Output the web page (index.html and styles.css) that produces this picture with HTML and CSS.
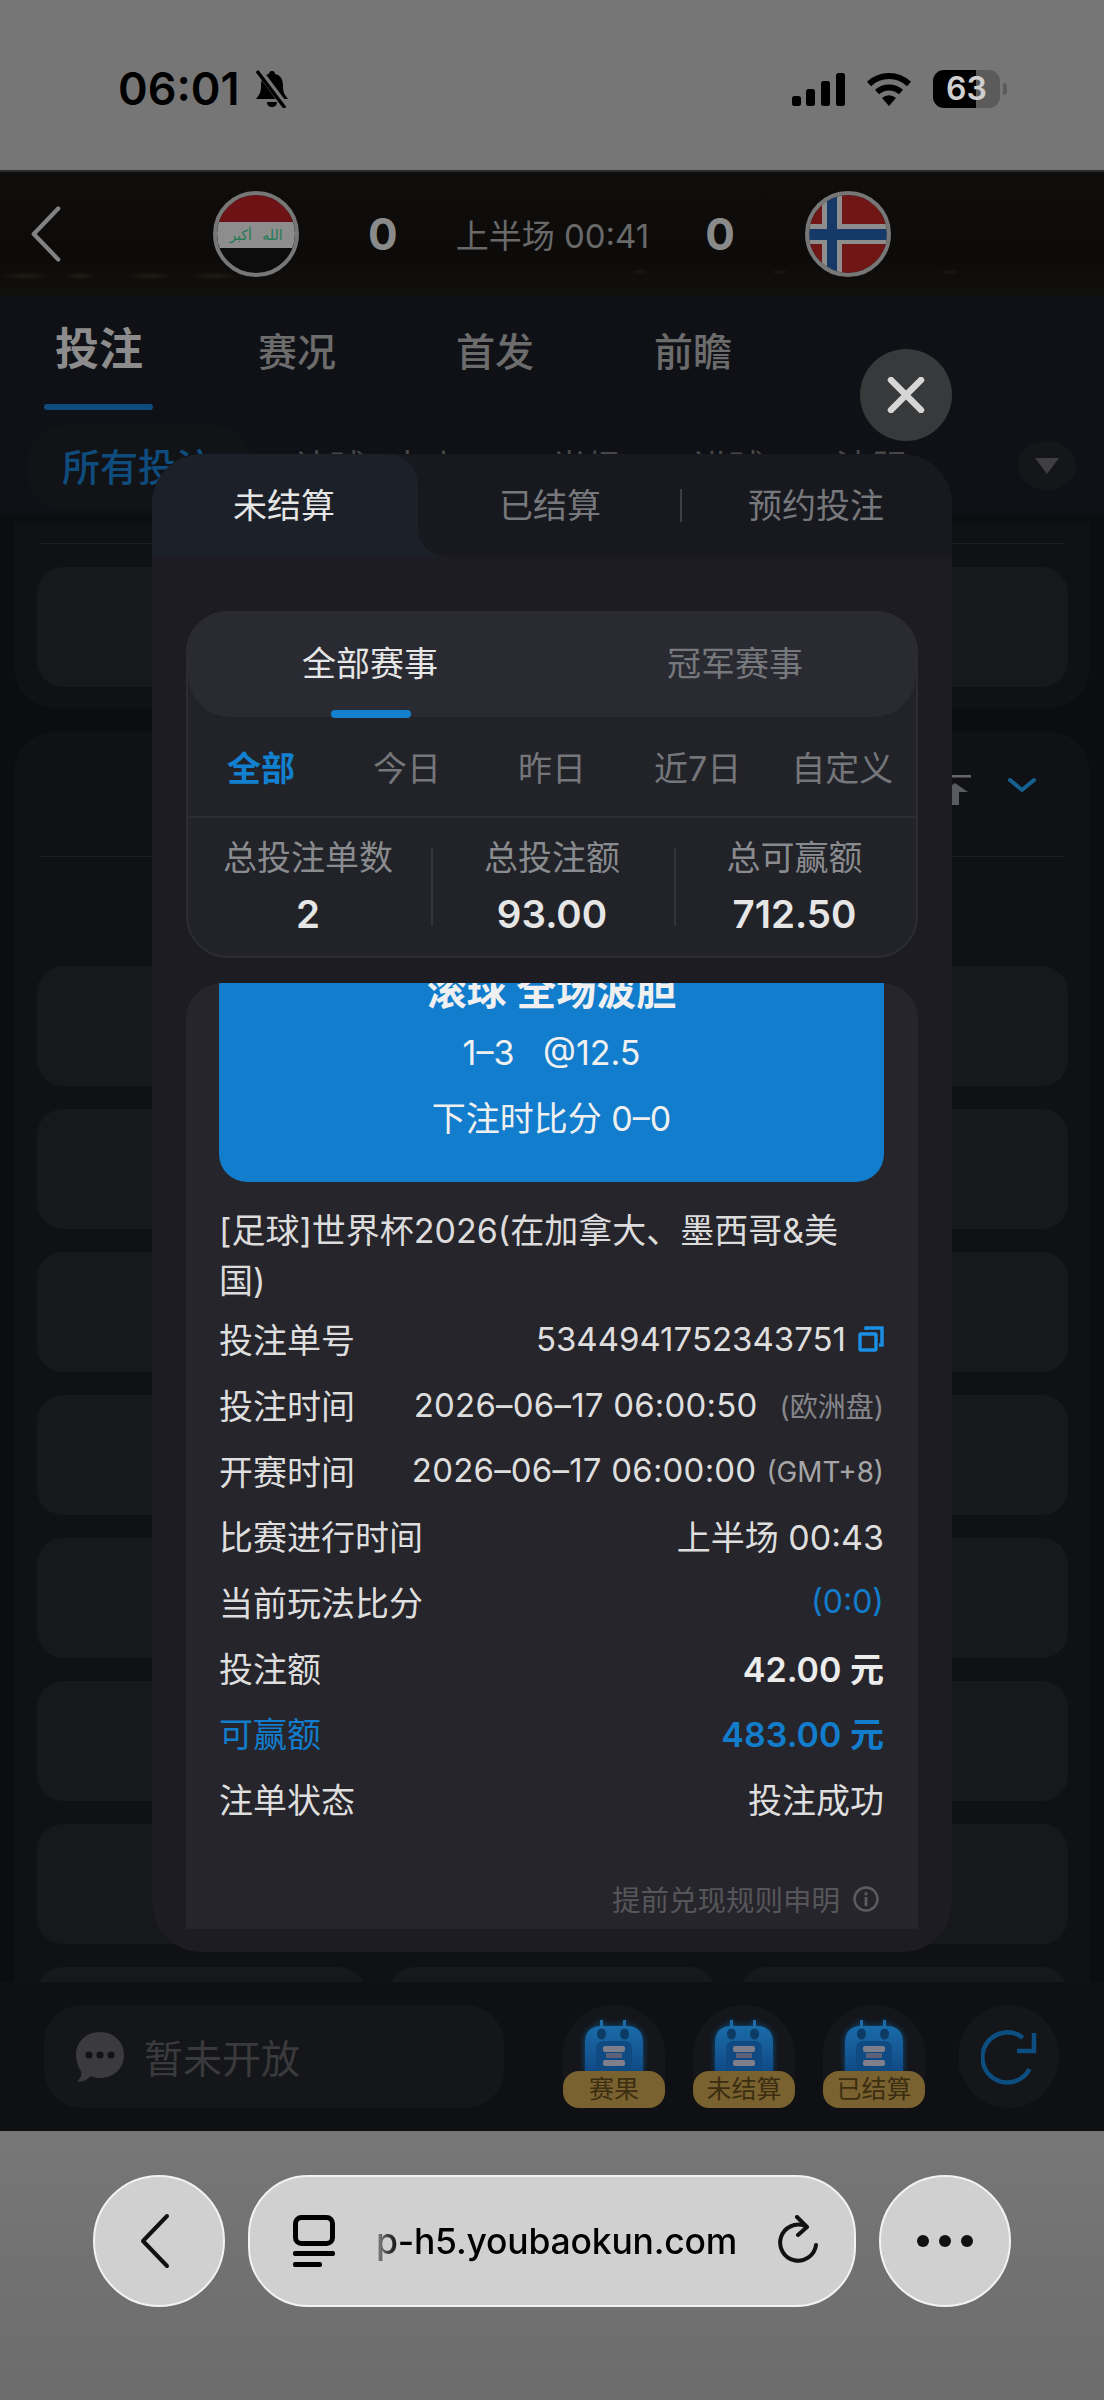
FILE: index.html
```html
<!DOCTYPE html>
<html lang="zh-CN">
<head>
<meta charset="utf-8">
<title>投注</title>
<link rel="stylesheet" href="styles.css">
</head>
<body>
<div class="screen">
  <header class="statusbar">
    <div class="clock">
      <span class="time">06:01</span>
      <svg class="bell" viewBox="0 0 36 38"><path d="M18 1c2 0 3 1 3 3 6 1 8 6 8 12 0 7 2 9 5 13H2c3-4 5-6 5-13 0-6 2-11 8-12 0-2 1-3 3-3zM13 32h10c0 3-2 5-5 5s-5-2-5-5z" fill="#000"/><path d="M5 1l27 36" stroke="#767676" stroke-width="7"/><path d="M3 1l28 37" stroke="#000" stroke-width="3.4"/></svg>
    </div>
    <div class="sysicons">
      <svg class="signal" viewBox="0 0 53 33"><rect x="0" y="23" width="9" height="10" rx="2.5"/><rect x="14" y="16" width="9" height="17" rx="2.5"/><rect x="29" y="8" width="9" height="25" rx="2.5"/><rect x="44" y="0" width="9" height="33" rx="2.5"/></svg>
      <svg class="wifi" viewBox="0 0 46 34"><path d="M3 12a29 29 0 0 1 40 0" fill="none" stroke="#000" stroke-width="6"/><path d="M11 20a18 18 0 0 1 24 0" fill="none" stroke="#000" stroke-width="6"/><path d="M16 26a10 10 0 0 1 14 0l-7 8z"/></svg>
      <div class="battery"><span class="batt-level">63</span></div>
      <span class="batt-nub"></span>
    </div>
  </header>

  <main class="app">
    <section class="match">
      <svg class="back" viewBox="0 0 34 60"><path d="M30 3L4 30l26 27" fill="none" stroke="#828282" stroke-width="4.5" stroke-linecap="round" stroke-linejoin="round"/></svg>
      <svg class="flag flag-iq" viewBox="0 0 86 86">
        <defs><clipPath id="c1"><circle cx="43" cy="43" r="39"/></clipPath></defs>
        <g clip-path="url(#c1)">
          <rect width="86" height="31" fill="#6f1216"/><rect y="31" width="86" height="26" fill="#8d8d8d"/><rect y="57" width="86" height="29" fill="#0d0c0d"/>
          <text x="43" y="49" text-anchor="middle" class="flag-script">الله أكبر</text>
        </g>
        <circle cx="43" cy="43" r="41" fill="none" stroke="#777" stroke-width="4"/>
      </svg>
      <strong class="score">0</strong>
      <span class="period">上半场 00:41</span>
      <strong class="score">0</strong>
      <svg class="flag flag-no" viewBox="0 0 86 86">
        <defs><clipPath id="c2"><circle cx="43" cy="43" r="39"/></clipPath></defs>
        <g clip-path="url(#c2)">
          <rect width="86" height="86" fill="#701614"/>
          <rect x="17" width="20" height="86" fill="#8d8d8d"/><rect y="33" width="86" height="20" fill="#8d8d8d"/>
          <rect x="22" width="10" height="86" fill="#153a68"/><rect y="38" width="86" height="11" fill="#153a68"/>
        </g>
        <circle cx="43" cy="43" r="41" fill="none" stroke="#777" stroke-width="4"/>
      </svg>
    </section>

    <nav class="maintabs">
      <a class="maintab is-on">投注</a><a class="maintab">赛况</a><a class="maintab">首发</a><a class="maintab">前瞻</a>
    </nav>

    <div class="filters">
      <span class="pill">所有投注</span>
      <span class="filter f1">让球&amp;大小</span>
      <span class="filter f2">半场</span>
      <span class="filter f3">进球</span>
      <span class="filter f4">波胆</span>
      <span class="drop"><i class="drop-arrow"></i></span>
    </div>

    <div class="panel panel-top">
      <div class="sep"></div>
      <div class="rowcard"></div>
    </div>

    <div class="panel panel-list">
      <div class="panel-head">
        <svg class="totop" viewBox="0 0 32 30"><path d="M0 1h32" stroke="#666" stroke-width="3"/><path d="M16 8L3 17h8v13h9V17h9z" fill="#585c60"/></svg>
        <svg class="chev" viewBox="0 0 28 16"><path d="M2 3l12 10L26 3" fill="none" stroke="#14618f" stroke-width="4" stroke-linecap="round"/></svg>
      </div>
      <div class="sep sep-list"></div>
      <div class="rowcard"></div><div class="rowcard"></div><div class="rowcard"></div><div class="rowcard"></div>
      <div class="rowcard"></div><div class="rowcard"></div><div class="rowcard"></div>
      <div class="cols"><div class="colcard"></div><div class="colcard"></div><div class="colcard"></div></div>
    </div>

    <footer class="dock">
      <div class="chatbox">
        <svg class="chat-ico" viewBox="0 0 50 52"><path d="M25 1c14 0 24 10 24 23S39 47 25 47c-3 0-6 0-9-2-3 3-8 6-14 6 3-3 5-7 4-11C3 36 1 30 1 24 1 11 11 1 25 1z" fill="#3b3b3d"/><circle cx="14" cy="24" r="3.6" fill="#121316"/><circle cx="25" cy="24" r="3.6" fill="#121316"/><circle cx="36" cy="24" r="3.6" fill="#121316"/></svg>
        <span class="chat-text">暂未开放</span>
      </div>
      <div class="shortcuts">
        <div class="shortcut">
          <svg class="book" viewBox="0 0 58 52"><use href="#bookshape"/></svg>
          <span class="badge">赛果</span>
        </div>
        <div class="shortcut">
          <svg class="book" viewBox="0 0 58 52"><use href="#bookshape"/></svg>
          <span class="badge">未结算</span>
        </div>
        <div class="shortcut">
          <svg class="book" viewBox="0 0 58 52"><use href="#bookshape"/></svg>
          <span class="badge">已结算</span>
        </div>
      </div>
      <div class="refresh">
        <svg viewBox="0 0 56 56"><path d="M39 7A25 25 0 1 0 50 37" fill="none" stroke="#0d4e80" stroke-width="4.5" transform="rotate(8 28 28)"/><path d="M53 4v18H36" fill="none" stroke="#0d4e80" stroke-width="4.5"/></svg>
      </div>
    </footer>
  </main>

  <footer class="browser">
    <button class="round">
      <svg viewBox="0 0 30 56" class="b-back"><path d="M27 3L3 28l24 25" fill="none" stroke="#111" stroke-width="4" stroke-linecap="round" stroke-linejoin="round"/></svg>
    </button>
    <div class="urlbar">
      <svg class="u-tabs" viewBox="0 0 42 52"><rect x="2.5" y="2.5" width="37" height="26" rx="6" fill="none" stroke="#000" stroke-width="5"/><rect x="0" y="36" width="42" height="5" rx="2" fill="#000"/><rect x="0" y="47" width="29" height="5" rx="2" fill="#000"/></svg>
      <span class="url">p-h5.youbaokun.com</span>
      <svg class="u-reload" viewBox="0 0 42 52"><path d="M27 11A18 18 0 1 0 38 30" fill="none" stroke="#111" stroke-width="4" stroke-linecap="round"/><path d="M19 2l10 10-9 8" fill="none" stroke="#111" stroke-width="4" stroke-linecap="round" stroke-linejoin="round"/></svg>
    </div>
    <button class="round">
      <span class="dots"><i></i><i></i><i></i></span>
    </button>
  </footer>

  <button class="close" aria-label="关闭">
    <svg viewBox="0 0 38 36"><path d="M4 3l30 30M34 3L4 33" stroke="#d6d6d6" stroke-width="6.5" stroke-linecap="round"/></svg>
  </button>

  <aside class="modal">
    <div class="m-tabs">
      <span class="m-tab is-on">未结算</span>
      <span class="m-tab m-tab2">已结算</span>
      <span class="m-div"></span>
      <span class="m-tab m-tab3">预约投注</span>
    </div>

    <section class="summary">
      <div class="kinds">
        <span class="kind is-on">全部赛事</span>
        <span class="kind">冠军赛事</span>
      </div>
      <div class="ranges">
        <span class="range is-on">全部</span><span class="range">今日</span><span class="range">昨日</span><span class="range">近7日</span><span class="range">自定义</span>
      </div>
      <div class="stats">
        <div class="stat"><span class="stat-l">总投注单数</span><b class="stat-v">2</b></div>
        <div class="stat"><span class="stat-l">总投注额</span><b class="stat-v">93.00</b></div>
        <div class="stat"><span class="stat-l">总可赢额</span><b class="stat-v">712.50</b></div>
      </div>
    </section>

    <section class="ticket">
      <div class="bluebox">
        <div class="bb-title">滚球 全场波胆</div>
        <div class="bb-line bb-odds">1–3&nbsp;&nbsp;&nbsp;@12.5</div>
        <div class="bb-line">下注时比分 0–0</div>
      </div>
      <div class="league">[足球]世界杯2026(在加拿大、墨西哥&amp;美国)</div>
      <div class="kv"><span>投注单号</span><span class="num v-id">5344941752343751<svg class="copy" viewBox="0 0 26 26"><rect x="2" y="8" width="16" height="16" rx="1" fill="none" stroke="#1a8fe6" stroke-width="3.4"/><path d="M8 4V2h16v17h-3" fill="none" stroke="#1a8fe6" stroke-width="3.4"/></svg></span></div>
      <div class="kv"><span>投注时间</span><span class="num date">2026–06–17 06:00:50<small class="tag tag-gap">(欧洲盘)</small></span></div>
      <div class="kv"><span>开赛时间</span><span class="num date">2026–06–17 06:00:00<small class="tag">(GMT+8)</small></span></div>
      <div class="kv"><span>比赛进行时间</span><span>上半场 00:43</span></div>
      <div class="kv"><span>当前玩法比分</span><span class="blue score-now">(0:0)</span></div>
      <div class="kv"><span>投注额</span><b class="strong">42.00 元</b></div>
      <div class="kv blue"><span>可赢额</span><b class="strong">483.00 元</b></div>
      <div class="kv"><span>注单状态</span><span>投注成功</span></div>
      <div class="rules">提前兑现规则申明<svg class="info" viewBox="0 0 26 26"><circle cx="13" cy="13" r="11.5" fill="none" stroke="#5d5d60" stroke-width="2.4"/><rect x="11.6" y="11" width="2.8" height="9" fill="#5d5d60"/><rect x="11.6" y="6.4" width="2.8" height="2.8" fill="#5d5d60"/></svg></div>
    </section>
  </aside>

  <svg class="defs" width="0" height="0">
    <symbol id="bookshape" viewBox="0 0 58 52">
      <defs><linearGradient id="bookfill" x1="0" y1="0" x2="0" y2="1"><stop offset="0" stop-color="#1a6ba8"/><stop offset="1" stop-color="#0f4a86"/></linearGradient></defs>
      <path d="M0 52V22C0 12 6 6 16 6h26c10 0 16 6 16 16v30z" fill="url(#bookfill)"/>
      <rect x="15" y="0" width="3" height="10" fill="#1d6da8"/><rect x="38" y="0" width="3" height="10" fill="#1d6da8"/>
      <ellipse cx="16.500" cy="14" rx="4.500" ry="5.500" fill="#0c3c66"/><ellipse cx="39.500" cy="14" rx="4.500" ry="5.500" fill="#0c3c66"/>
      <path d="M11 52V29c0-5 3-8 8-8h20c5 0 8 3 8 8v23z" fill="#0f4a82"/>
      <rect x="18" y="26" width="22" height="6" rx="2" fill="#7f7f8c"/><rect x="21" y="33" width="16" height="5" rx="1" fill="#5d6278"/><rect x="18" y="40" width="22" height="6" rx="2" fill="#7f7f8c"/>
    </symbol>
  </svg>
</div>
</body>
</html>
```

FILE: styles.css
```css
* { box-sizing: border-box; }
html, body { margin: 0; padding: 0; background: #767676; }
body { font-family: Inter, "Noto Sans CJK SC", sans-serif; }
i { display: block; }
button { border: 0; padding: 0; font: inherit; }

.screen { position: relative; width: 1104px; height: 2400px; display: flex; flex-direction: column; overflow: hidden; }
.defs { position: absolute; }

/* status bar */
.statusbar { height: 170px; flex: none; background: #767676; display: flex; justify-content: space-between; padding: 70px 97px 0 118px; }
.clock { display: flex; align-items: flex-start; gap: 14px; height: 38px; }
.time { font-size: 45px; font-weight: 600; line-height: 38px; color: #000; }
.bell { width: 36px; height: 38px; }
.sysicons { display: flex; align-items: flex-start; }
.signal { width: 53px; height: 33px; margin-top: 3px; }
.wifi { width: 46px; height: 34px; margin: 2px 21px; }
.battery { width: 67px; height: 38px; border-radius: 11px; background: linear-gradient(90deg, #000 64%, #5b5b5b 64%); display: flex; align-items: center; justify-content: center; }
.batt-level { color: #cfcfcf; font-size: 32px; font-weight: 600; line-height: 1; }
.batt-nub { width: 4px; height: 12px; margin: 13px 0 0 3px; background: #5b5b5b; border-radius: 0 4px 4px 0; }

/* app behind the sheet */
.app { height: 1961px; flex: none; background: #0c0d0f; display: flex; flex-direction: column; overflow: hidden; }
.match { height: 125px; flex: none; display: flex; align-items: center; padding: 0 213px 0 30px; border-top: 2px solid #2c2c2c; background: radial-gradient(ellipse 24px 4px at 25px 104px, #211c12, transparent), radial-gradient(ellipse 18px 4px at 80px 104px, #211c12, transparent), radial-gradient(ellipse 24px 4px at 150px 104px, #211c12, transparent), radial-gradient(ellipse 24px 4px at 215px 104px, #211c12, transparent), radial-gradient(ellipse 10px 3px at 640px 100px, #1c1810, transparent), radial-gradient(ellipse 10px 3px at 780px 100px, #1c1810, transparent), radial-gradient(ellipse 10px 3px at 950px 100px, #1c1810, transparent), linear-gradient(180deg, #0f0e0d 0, #0c0b0a 70%, #12100d 100%); }
.back { width: 32px; height: 58px; margin-right: 151px; }
.flag { width: 86px; height: 86px; flex: none; }
.flag-script { font-family: "DejaVu Sans", sans-serif; font-size: 14px; fill: #1f7a52; word-spacing: 6px; }
.score { font-size: 44px; font-weight: 700; color: #8a8a8a; line-height: 1; }
.flag-iq + .score { margin-left: 69px; }
.period { font-size: 33px; color: #696969; margin: 0 56px 0 58px; white-space: nowrap; }
.flag-no { margin-left: 70px; }

.maintabs { height: 130px; flex: none; background: #101116; display: flex; gap: 0; padding-left: 55px; }
.maintab { position: relative; font-size: 39px; font-weight: 500; color: #6c6c6c; line-height: 52px; margin: 31px 120px 0 0; }
.maintab.is-on { font-size: 44px; font-weight: 700; color: #8c8c8c; margin-top: 28px; margin-right: 115px; }
.maintab.is-on::after { content: ""; position: absolute; left: -11px; right: -10px; top: 81px; height: 6px; background: #0f4c7e; border-radius: 3px; }

.filters { height: 88px; flex: none; background: #101116; display: flex; align-items: center; position: relative; padding-left: 28px; }
.pill { width: 222px; height: 85px; border-radius: 36px; background: #121317; color: #0f4c7e; font-size: 38px; font-weight: 500; padding-left: 34px; line-height: 84px; white-space: nowrap; flex: none; margin-top: -3px; }
.filter { font-size: 36px; color: #474747; margin-top: -8px; white-space: nowrap; }
.f1 { margin-left: 44px; }
.f2 { margin-left: 90px; }
.f3 { margin-left: 70px; }
.f4 { margin-left: 70px; }
.drop { position: absolute; left: 1018px; top: 16px; width: 58px; height: 49px; border-radius: 50%; background: #15161a; display: flex; align-items: center; justify-content: center; }
.drop-arrow { width: 0; height: 0; border: 12px solid transparent; border-top: 16px solid #3f3f41; border-bottom: 0; }

.panel { margin: 0 14px; background: #101114; flex: none; padding: 0 22px 0 23px; }
.panel-top { height: 185px; margin-top: 10px; border-radius: 0 0 40px 40px; padding-top: 20px; margin-bottom: 24px; }
.panel-list { flex: 1; min-height: 0; flex-shrink: 1; border-radius: 40px 40px 0 0; overflow: hidden; }
.sep { height: 1px; background: #1d1e22; margin: 0 4px 23px 3px; }
.panel-head { height: 124px; display: flex; justify-content: flex-end; align-items: flex-start; gap: 37px; padding: 43px 32px 0 0; }
.totop { width: 32px; height: 30px; }
.chev { width: 28px; height: 16px; margin-top: 2px; }
.sep-list { margin-bottom: 109px; }
.rowcard { height: 120px; border-radius: 26px; background: #17181b; margin-bottom: 23px; }
.cols { display: grid; grid-template-columns: repeat(3, 1fr); gap: 24px; }
.colcard { height: 60px; border-radius: 26px 26px 0 0; background: #17181b; }

.dock { height: 149px; flex: none; background: #0f1014; display: flex; align-items: flex-start; padding: 23px 0 0 44px; position: relative; }
.chatbox { width: 460px; height: 103px; border-radius: 38px; background: #141619; display: flex; align-items: center; gap: 19px; padding-left: 31px; }
.chat-ico { width: 50px; height: 52px; }
.chat-text { font-size: 39px; color: #3a3a3c; margin-top: -2px; }
.shortcuts { display: flex; gap: 28px; margin-left: 59px; }
.shortcut { width: 102px; height: 103px; border-radius: 50px 50px 28px 28px; background: #14161a; position: relative; display: flex; justify-content: center; padding-top: 15px; }
.book { width: 58px; height: 52px; filter: drop-shadow(0 0 3px #0d4f80); }
.badge { position: absolute; left: 0; right: 0; bottom: 0; height: 37px; border-radius: 16px; background: #7a6230; color: #3c2e10; font-size: 25px; line-height: 37px; text-align: center; white-space: nowrap; }
.refresh { width: 101px; height: 103px; border-radius: 50%; background: #14161a; margin-left: 33px; display: flex; align-items: center; justify-content: center; }
.refresh svg { width: 56px; height: 56px; }

/* browser bar */
.browser { flex: 1; background: linear-gradient(180deg, #777 0, #6c6c6c 100%); display: flex; gap: 23px; padding: 44px 0 0 93px; }
.round { width: 132px; height: 132px; border-radius: 50%; background: #d0d0d0; border: 2px solid #f2f2f2; display: flex; align-items: center; justify-content: center; flex: none; }
.b-back { width: 30px; height: 56px; margin-right: 8px; }
.dots { display: flex; gap: 10px; }
.dots i { width: 12px; height: 12px; border-radius: 50%; background: #111; }
.urlbar { width: 608px; height: 132px; border-radius: 60px; background: #d0d0d0; border: 2px solid #f2f2f2; display: flex; align-items: center; padding: 0 34px 0 43px; flex: none; }
.u-tabs { width: 42px; height: 52px; flex: none; }
.url { margin-left: 41px; font-size: 35.500px; font-weight: 500; letter-spacing: -0.2px; color: #000; white-space: nowrap; -webkit-mask-image: linear-gradient(90deg, rgba(0,0,0,.35) 0, #000 24px); mask-image: linear-gradient(90deg, rgba(0,0,0,.35) 0, #000 24px); }
.u-reload { width: 42px; height: 52px; margin-left: auto; flex: none; }

/* sheet */
.close { position: absolute; left: 860px; top: 349px; width: 92px; height: 92px; border-radius: 50%; background: #38393b; display: flex; align-items: center; justify-content: center; }
.close svg { width: 38px; height: 36px; }

.modal { position: absolute; left: 152px; top: 454px; width: 800px; height: 1498px; border-radius: 50px; background: #1c1c22; overflow: hidden; color: #e4e4e4; }

.m-tabs { height: 103px; background: #17191f; display: flex; align-items: center; font-size: 34px; color: #77787c; }
.m-tab { line-height: 50px; white-space: nowrap; }
.m-tab.is-on { position: relative; width: 266px; height: 103px; background: #1c2029; border-radius: 0 30px 0 0; color: #e6e6e6; padding: 27px 0 0 81px; flex: none; }
.m-tab.is-on::after { content: ""; position: absolute; left: 100%; bottom: 0; width: 28px; height: 28px; background: radial-gradient(circle at 100% 0, transparent 27.500px, #1c2029 28px); }
.m-tab2 { margin-left: 81px; }
.m-div { width: 2px; height: 33px; background: #3d3e43; margin-left: 79px; }
.m-tab3 { margin-left: 66px; }

.summary { margin: 54px 34px 0; height: 347px; border-radius: 42px; background: #212329; border: 2px solid #2b2d33; overflow: hidden; }
.kinds { height: 104px; background: #2a2b32; border-radius: 0 0 42px 42px; display: grid; grid-template-columns: 364px 1fr; position: relative; }
.kind { font-size: 34px; line-height: 102px; color: #77787c; text-align: center; white-space: nowrap; }
.kinds .kind:nth-child(2) { padding-right: 0; text-align: left; padding-left: 115px; }
.kind.is-on { color: #e6e6e6; position: relative; }
.kind.is-on::after { content: ""; position: absolute; left: 143px; bottom: -1px; width: 80px; height: 8px; border-radius: 4px; background: #1280cf; }
.ranges { height: 101px; border-bottom: 2px solid #2b2d33; display: flex; align-items: center; font-size: 34px; color: #75767a; padding-left: 39px; }
.range { white-space: nowrap; }
.range:nth-child(2) { margin-left: 78px; }
.range:nth-child(3) { margin-left: 77px; }
.range:nth-child(4) { margin-left: 68px; }
.range:nth-child(5) { margin-left: 50px; }
.range.is-on { color: #1280cf; font-weight: 700; }
.stats { display: grid; grid-template-columns: 243px 243px 1fr; padding-top: 30px; }
.stat { display: flex; flex-direction: column; align-items: center; height: 78px; position: relative; padding-right: 3px; }
.stat + .stat { border-left: 2px solid #33353b; }
.stat-l { font-size: 34px; line-height: 34px; margin-top: -7px; color: #8a8b8e; white-space: nowrap; }
.stat-v { font-size: 38.500px; font-weight: 600; line-height: 50px; margin-top: 14px; color: #e6e6e6; }

.ticket { margin: 25px 34px 0; height: 946px; background: #26252b; border-radius: 36px 36px 0 0; padding: 0 34px 0 33px; overflow: hidden; font-size: 34px; }
.bluebox { height: 199px; background: #127dcc; border-radius: 0 0 28px 28px; text-align: center; color: #f0f0f0; overflow: hidden; }
.bb-title { font-size: 40px; font-weight: 700; line-height: 50px; margin-top: -17px; }
.bb-line { line-height: 50px; margin-top: 16px; font-size: 34px; }
.bb-odds { margin-top: 12px; }
.league { margin-top: 24px; line-height: 50px; padding-right: 30px; color: #dcdcdc; font-size: 34px; }
.kv { height: 65.700px; display: flex; justify-content: space-between; align-items: center; color: #dedede; font-size: 34px; white-space: nowrap; }
.num { font-size: 33px; }
.date { letter-spacing: 0.2px; }
.score-now { font-size: 32px; }
.v-id { display: flex; align-items: center; gap: 12px; }
.copy { width: 26px; height: 26px; flex: none; }
.tag { font-size: 27.800px; letter-spacing: 0; color: #a5a5a7; margin-left: 10px; }
.tag-gap { margin-left: 22px; font-size: 28px; color: #85858a; }
.blue { color: #127dcc; }
.strong { font-weight: 600; color: #ececec; }
.kv.blue .strong { color: #127dcc; }
.rules { margin-top: 47px; height: 40px; display: flex; align-items: center; justify-content: flex-end; gap: 13px; font-size: 28.500px; color: #56565a; padding-right: 5px; }
.info { width: 26px; height: 26px; }
```
